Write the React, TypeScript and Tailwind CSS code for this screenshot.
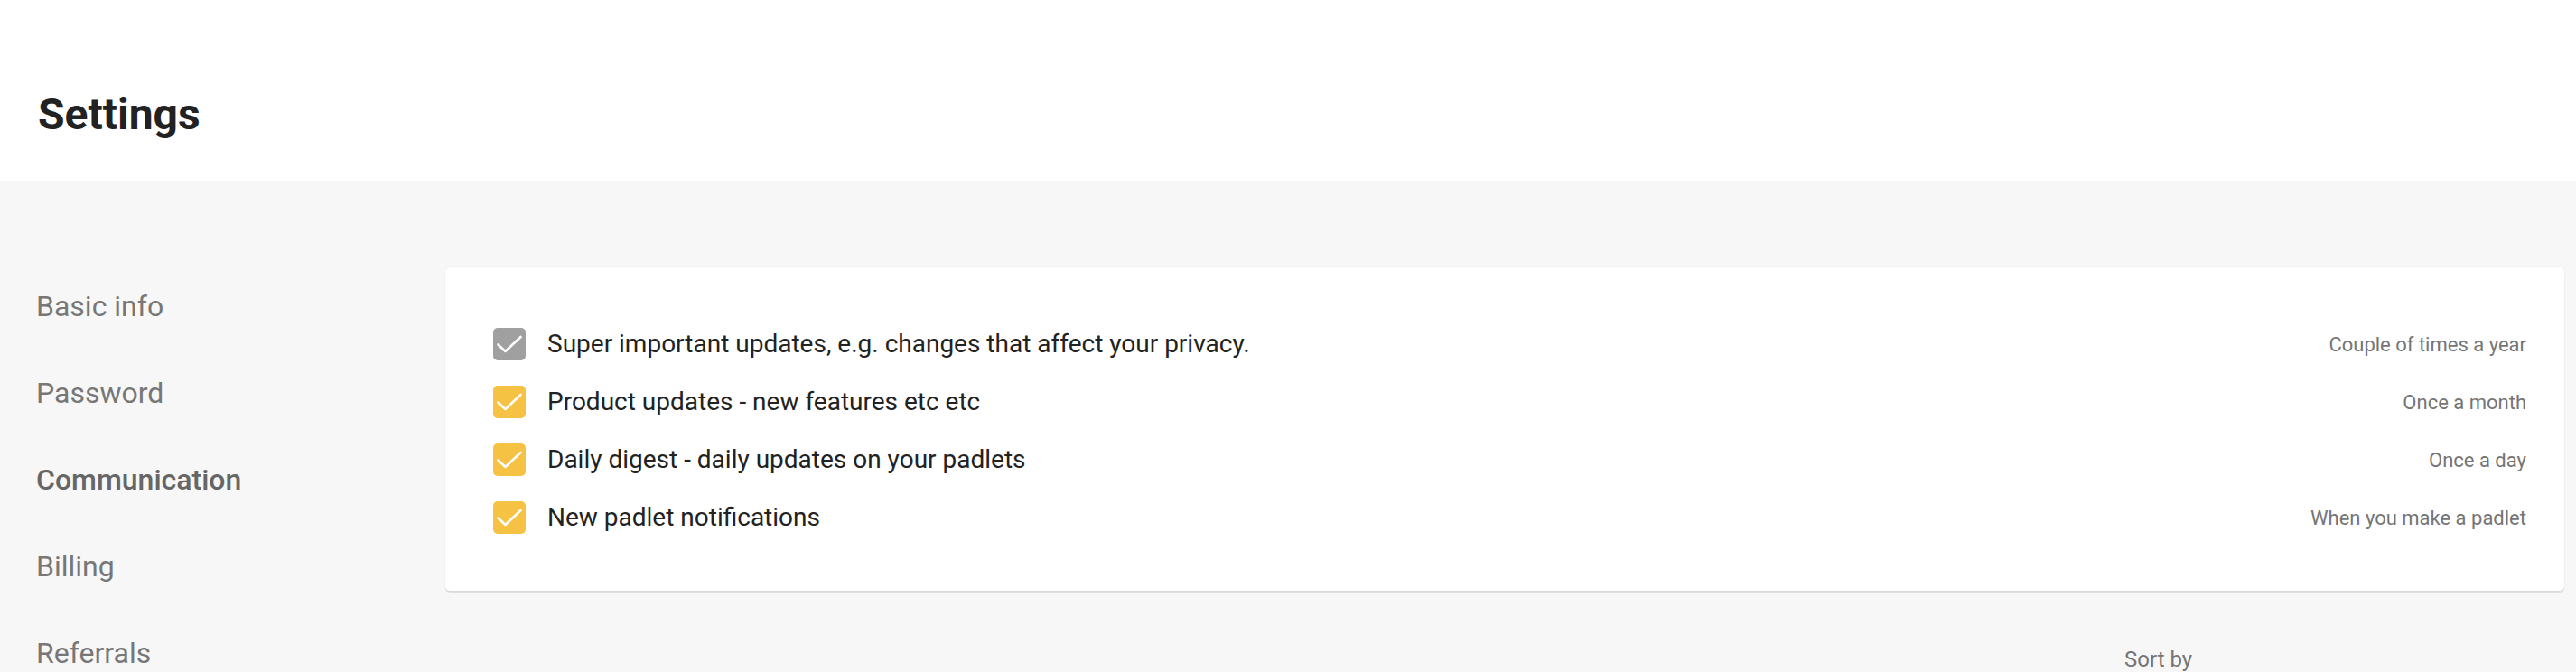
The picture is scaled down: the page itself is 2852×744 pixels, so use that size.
const NAV = [
  { key: 'basic', label: 'Basic info' },
  { key: 'password', label: 'Password' },
  { key: 'communication', label: 'Communication', active: true },
  { key: 'billing', label: 'Billing' },
  { key: 'referrals', label: 'Referrals' },
]

const OPCIONES = [
  { key: 'privacy', label: 'Super important updates, e.g. changes that affect your privacy.', freq: 'Couple of times a year', locked: true },
  { key: 'product', label: 'Product updates - new features etc etc', freq: 'Once a month' },
  { key: 'digest', label: 'Daily digest - daily updates on your padlets', freq: 'Once a day' },
  { key: 'new', label: 'New padlet notifications', freq: 'When you make a padlet' },
]

function Check({ locked }: { locked?: boolean }) {
  return (
    <span className={`flex h-[36px] w-[36px] flex-shrink-0 items-center justify-center rounded-[5px] ${locked ? 'bg-[#a0a0a0]' : 'bg-[#f6c244]'}`}>
      <svg width="36" height="36" viewBox="0 0 36 36" fill="none">
        <polyline points="5.5,18.5 13.5,26 30.5,10" stroke="#fff" strokeWidth="2.6" strokeLinecap="round" strokeLinejoin="round" />
      </svg>
    </span>
  )
}

export default function App() {
  return (
    <div className="min-h-[744px] bg-[#f7f7f7] font-['Roboto',sans-serif]">
      <header className="h-[200px] bg-white pl-[42px] pt-[103px]">
        <h1 className="text-[48px] font-bold leading-none text-[#222]">Settings</h1>
      </header>

      <div className="flex">
        <nav className="w-[493px] flex-shrink-0 pl-[40px] pt-[91px]">
          {NAV.map(n => (
            <div key={n.key}
              className={`h-[96px] text-[32px] leading-[96px] ${n.active ? 'font-medium text-[#666]' : 'text-[#777]'}`}>
              {n.label}
            </div>
          ))}
        </nav>

        <div className="flex-1 pr-[13px] pt-[96px]">
          <div className="rounded-[5px] bg-white pb-[49px] pl-[53px] pr-[42px] pt-[53px] shadow-[0_2px_1px_rgba(0,0,0,0.1),0_0_2px_rgba(0,0,0,0.08)]">
            {OPCIONES.map(o => (
              <div key={o.key} className="flex h-[64px] items-center">
                <Check locked={o.locked} />
                <span className="ml-[24px] flex-1 text-[28px] text-[#222]">{o.label}</span>
                <span className="text-[22px] text-[#757575]">{o.freq}</span>
              </div>
            ))}
          </div>

          <div className="ml-[1859px] mt-[58px] text-[24px] text-[#757575]">Sort by</div>
        </div>
      </div>
    </div>
  )
}
